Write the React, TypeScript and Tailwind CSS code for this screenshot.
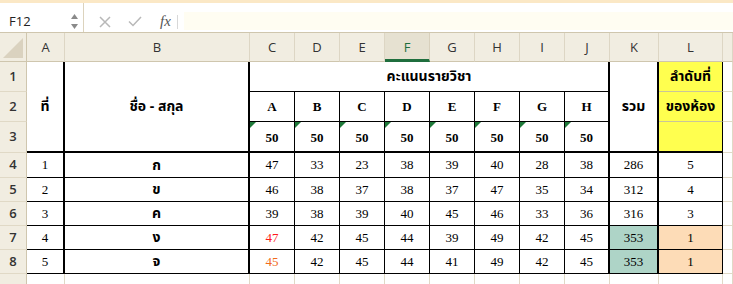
import React from "react"

const thai = "font-['Tahoma','Noto_Sans_Thai','Noto_Sans','DejaVu_Sans',sans-serif]"
const serif = "font-['Liberation_Serif','Times_New_Roman',serif]"
const ui = "font-['Open_Sans','Liberation_Sans',sans-serif]"

const cols = ["A", "B", "C", "D", "E", "F", "G", "H", "I", "J", "K", "L", ""]
const subjects = ["A", "B", "C", "D", "E", "F", "G", "H"]

const rows = [
  { no: 1, name: "ก", scores: [47, 33, 23, 38, 39, 40, 28, 38], total: 286, rank: 5 },
  { no: 2, name: "ข", scores: [46, 38, 37, 38, 37, 47, 35, 34], total: 312, rank: 4 },
  { no: 3, name: "ค", scores: [39, 38, 39, 40, 45, 46, 33, 36], total: 316, rank: 3 },
  { no: 4, name: "ง", scores: [47, 42, 45, 44, 39, 49, 42, 45], total: 353, rank: 1 },
  { no: 5, name: "จ", scores: [45, 42, 45, 44, 41, 49, 42, 45], total: 353, rank: 1 }
]

const rowHead = `flex items-center justify-center bg-[#f1ede1] border-r border-b border-r-[#cfc6ae] border-b-[#e0d9c6] text-[13px] font-semibold text-[#333] ${ui}`

function Flag() {
  return (
    <span className="absolute top-0 left-0 w-0 h-0 border-t-[6px] border-r-[6px] border-t-[#1f7a3a] border-r-transparent" />
  )
}

export default function App() {
  return (
    <div className="w-[733px] h-[284px] overflow-hidden bg-white">
      <div className="h-[3px] bg-[#fbe8c6]" />
      {/* formula bar */}
      <div className={`flex h-[30px] items-stretch border-b border-[#cfc6ae] bg-white ${ui}`}>
        <div className="flex w-[84px] items-center justify-between border-r border-[#dcd3bd] pl-[9px] pr-[5px] pt-[8px]">
          <span className="text-[13px] text-[#222]">F12</span>
          <span className="flex flex-col items-center gap-[5px]">
            <svg width="7" height="5" viewBox="0 0 7 5"><path d="M3.5 0L7 5H0z" fill="#8a8a8a" /></svg>
            <svg width="7" height="5" viewBox="0 0 7 5"><path d="M0 0H7L3.5 5z" fill="#8a8a8a" /></svg>
          </span>
        </div>
        <div className="flex items-center pl-[15px] pt-[8px]">
          <svg width="12" height="12" viewBox="0 0 12 12" className="mr-[17px]">
            <path d="M1 1L11 11M11 1L1 11" stroke="#b8b8b8" strokeWidth="1.5" />
          </svg>
          <svg width="14" height="11" viewBox="0 0 14 11" className="mr-[18px]">
            <path d="M1 5.5L5 9.5L13 1" stroke="#b8b8b8" strokeWidth="1.5" fill="none" />
          </svg>
          <span className="text-[15px] italic text-[#555] font-['Liberation_Serif',serif] mr-[6px]">fx</span>
          <span className="h-[14px] w-px bg-[#d8d8d8]" />
        </div>
        <div className="ml-[6px] mt-[9px] mb-[2px] flex-1 bg-[#fffdf2]" />
      </div>

      {/* sheet */}
      <div className="grid grid-cols-[27px_38px_185px_repeat(8,45px)_49px_64px_1fr] grid-rows-[29px_30px_30px_31px_25px_24px_24px_24px_24px_1fr] h-[251px]">
        {/* column headers */}
        <div className="relative bg-[#f1ede1] border-r border-b border-r-[#cfc6ae] border-b-[#cfc6ae]">
          <svg className="absolute right-[3px] bottom-[3px]" width="20" height="20" viewBox="0 0 20 20">
            <path d="M20 0V20H0z" fill="#dad2bf" />
          </svg>
        </div>
        {cols.map((c, i) =>
          c === "F" ? (
            <div
              key={i}
              className={`flex items-center justify-center bg-[#e6e1d1] border-r border-r-[#d8d0bc] border-b-[3px] border-b-[#1f6e3d] pt-[4px] text-[13px] text-[#1f6e3d] ${ui}`}
            >
              {c}
            </div>
          ) : (
            <div
              key={i}
              className={`flex items-center justify-center bg-[#f1ede1] border-r border-b border-r-[#ddd6c4] border-b-[#cfc6ae] pt-[2px] text-[13px] text-[#333] ${ui}`}
            >
              {c}
            </div>
          )
        )}

        {/* header block rows 1-3 */}
        <div className={`col-start-1 row-start-2 ${rowHead}`}>1</div>
        <div className={`col-start-1 row-start-3 ${rowHead}`}>2</div>
        <div className={`col-start-1 row-start-4 ${rowHead}`}>3</div>

        <div className={`col-start-2 row-start-2 row-span-3 flex items-center justify-center border-r-2 border-b-2 border-black text-[14px] font-bold ${thai}`}>
          ที่
        </div>
        <div className={`col-start-3 row-start-2 row-span-3 flex items-center justify-center border-r-2 border-b-2 border-black text-[14px] font-bold ${thai}`}>
          ชื่อ - สกุล
        </div>
        <div className={`col-start-4 col-span-8 row-start-2 flex items-center justify-center border-r-2 border-b border-black text-[14px] font-bold ${thai}`}>
          คะแนนรายวิชา
        </div>
        {subjects.map((s, i) => (
          <div
            key={s}
            className={`row-start-3 flex items-center justify-center border-b border-black text-[13px] font-bold ${serif} ${i === 7 ? "border-r-2" : "border-r"}`}
            style={{ gridColumnStart: i + 4 }}
          >
            {s}
          </div>
        ))}
        {subjects.map((s, i) => (
          <div
            key={"m" + s}
            className={`relative row-start-4 flex items-end justify-center pb-[4px] border-b-2 border-black text-[13px] font-bold ${serif} ${i === 7 ? "border-r-2" : "border-r"}`}
            style={{ gridColumnStart: i + 4 }}
          >
            <Flag />
            50
          </div>
        ))}
        <div className={`col-start-12 row-start-2 row-span-3 flex items-center justify-center border-r-2 border-b-2 border-black text-[14px] font-bold ${thai}`}>
          รวม
        </div>
        <div className={`col-start-13 row-start-2 flex items-center justify-center bg-[#ffff4f] border-r border-r-black border-b border-b-[#c9c59a] text-[14px] font-bold ${thai}`}>
          ลำดับที่
        </div>
        <div className={`col-start-13 row-start-3 flex items-center justify-center bg-[#ffff4f] border-r border-r-black border-b border-b-[#c9c59a] text-[14px] font-bold ${thai}`}>
          ของห้อง
        </div>
        <div className="col-start-13 row-start-4 bg-[#ffff4f] border-r border-b-2 border-black" />
        <div className="col-start-14 row-start-2 border-r border-b border-[#e0d9c6]" />
        <div className="col-start-14 row-start-3 border-r border-b border-[#e0d9c6]" />
        <div className="col-start-14 row-start-4 border-r border-b border-[#e0d9c6]" />

        {/* data rows */}
        {rows.map((r, ri) => (
          <React.Fragment key={r.no}>
            <div className={rowHead}>{r.no + 3}</div>
            <div className={`flex items-center justify-center border-r-2 border-b border-black text-[13px] text-black ${serif}`}>
              {r.no}
            </div>
            <div className={`flex items-center justify-center border-r-2 border-b border-black text-[14px] font-bold ${thai}`}>
              {r.name}
            </div>
            {r.scores.map((v, i) => (
              <div
                key={i}
                className={`flex items-center justify-center border-b border-black text-[13px] ${serif} ${i === 7 ? "border-r-2" : "border-r"} ${
                  i === 0 && ri === 3 ? "text-[#ff1a1a]" : i === 0 && ri === 4 ? "text-[#f26a1b]" : "text-black"
                }`}
              >
                {v}
              </div>
            ))}
            <div
              className={`flex items-center justify-center border-r-2 border-b border-black text-[13px] text-black ${serif} ${ri >= 3 ? "bg-[#aed4c7]" : ""}`}
            >
              {r.total}
            </div>
            <div
              className={`flex items-center justify-center border-r border-b border-black text-[13px] text-black ${serif} ${ri >= 3 ? "bg-[#fddcb7]" : ""}`}
            >
              {r.rank}
            </div>
            <div className="border-r border-b border-[#e0d9c6]" />
          </React.Fragment>
        ))}

        {/* partial row 9 */}
        <div className="bg-[#f1ede1] border-r border-r-[#cfc6ae]" />
        {cols.map((_, i) => (
          <div key={"z" + i} className="border-r border-[#e0d9c6]" />
        ))}
      </div>
    </div>
  )
}
